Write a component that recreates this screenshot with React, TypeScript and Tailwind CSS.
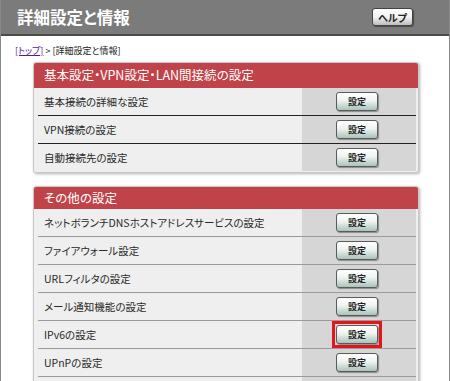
import type { ReactNode } from 'react'

const font = { fontFamily: '"Noto Sans CJK JP", "Liberation Sans", sans-serif' }

const basicRows = ['基本接続の詳細な設定', 'VPN接続の設定', '自動接続先の設定']
const otherRows = [
  'ネットボランチDNSホストアドレスサービスの設定',
  'ファイアウォール設定',
  'URLフィルタの設定',
  'メール通知機能の設定',
  'IPv6の設定',
  'UPnPの設定',
]

function SetButton({ highlight }: { highlight?: boolean }) {
  const btn = (
    <button className="flex h-[19px] w-[42px] items-center justify-center rounded-[3px] border border-[#5a5a5a] bg-[linear-gradient(#ffffff,#eef3f1_45%,#a9c3bb)] text-[9px] font-bold leading-none text-[#222] shadow-[1px_1px_1px_rgba(0,0,0,0.35)]">
      設定
    </button>
  )
  if (!highlight) return btn
  return <div className="border-[3px] border-[#e8131b] px-[1px] py-[1px]">{btn}</div>
}

function Card({ title, children, headerH }: { title: string; children: ReactNode; headerH: string }) {
  return (
    <div className="mx-[32px] w-[386px] overflow-hidden rounded-[3px] border border-[#c8c8c8] bg-[#efefef] shadow-[1px_1px_3px_rgba(0,0,0,0.3)]">
      <div className={`${headerH} flex items-center bg-[#c1434a] pl-[10px] text-[12.5px] text-white`}>{title}</div>
      {children}
    </div>
  )
}

function Rows({ items, lineColor, highlightIndex, tail }: { items: string[]; lineColor: string; highlightIndex?: number; tail?: boolean }) {
  return (
    <div className="pr-[2px]">
      {items.map((label, i) => (
        <div key={label}>
          {i > 0 && <div className={`ml-[4px] h-px ${lineColor}`} />}
          <div className="flex h-[27px]">
            <div className="flex flex-1 items-center pl-[10px] text-[10.5px] text-[#2a2a2a]">{label}</div>
            <div className="flex w-[114px] items-center justify-center bg-[#d6d6d6] pr-[4px]">
              <SetButton highlight={i === highlightIndex} />
            </div>
          </div>
        </div>
      ))}
      {tail && (
        <div>
          <div className={`ml-[4px] h-px ${lineColor}`} />
          <div className="flex h-[27px]">
            <div className="flex-1" />
            <div className="w-[114px] bg-[#d6d6d6]" />
          </div>
        </div>
      )}
    </div>
  )
}

export default function App() {
  return (
    <div
      className="h-[381px] w-[450px] overflow-hidden border-x border-[#8a8a8a] bg-white [font-feature-settings:'palt']"
      style={font}
    >
      <header className="flex h-[36px] items-center justify-between border-b-2 border-[#4a4a4a] bg-[#7b7b7b] pl-[16px] pr-[36px]">
        <h1 className="text-[16.5px] font-bold text-white">詳細設定と情報</h1>
        <button className="flex h-[18px] w-[41px] items-center justify-center rounded-[3px] border border-[#444] bg-[linear-gradient(#ffffff,#f2f2f2_50%,#bdbdbd)] text-[10px] font-bold text-[#222] shadow-[1px_1px_1px_rgba(0,0,0,0.4)]">
          ヘルプ
        </button>
      </header>
      <div className="pl-[14px] pt-[9px] text-[9px] leading-[12px] text-[#222]">
        <a className="text-[#551a8b] underline">[トップ]</a> &gt; [詳細設定と情報]
      </div>
      <div className="mt-[5px] flex flex-col gap-[13px]">
        <Card title="基本設定・VPN設定・LAN間接続の設定" headerH="h-[25px]">
          <Rows items={basicRows} lineColor="bg-[#222]" />
          <div className="h-[1px]" />
        </Card>
        <Card title="その他の設定" headerH="h-[22px]">
          <Rows items={otherRows} lineColor="bg-[#9a9a9a]" highlightIndex={4} tail />
        </Card>
      </div>
    </div>
  )
}
